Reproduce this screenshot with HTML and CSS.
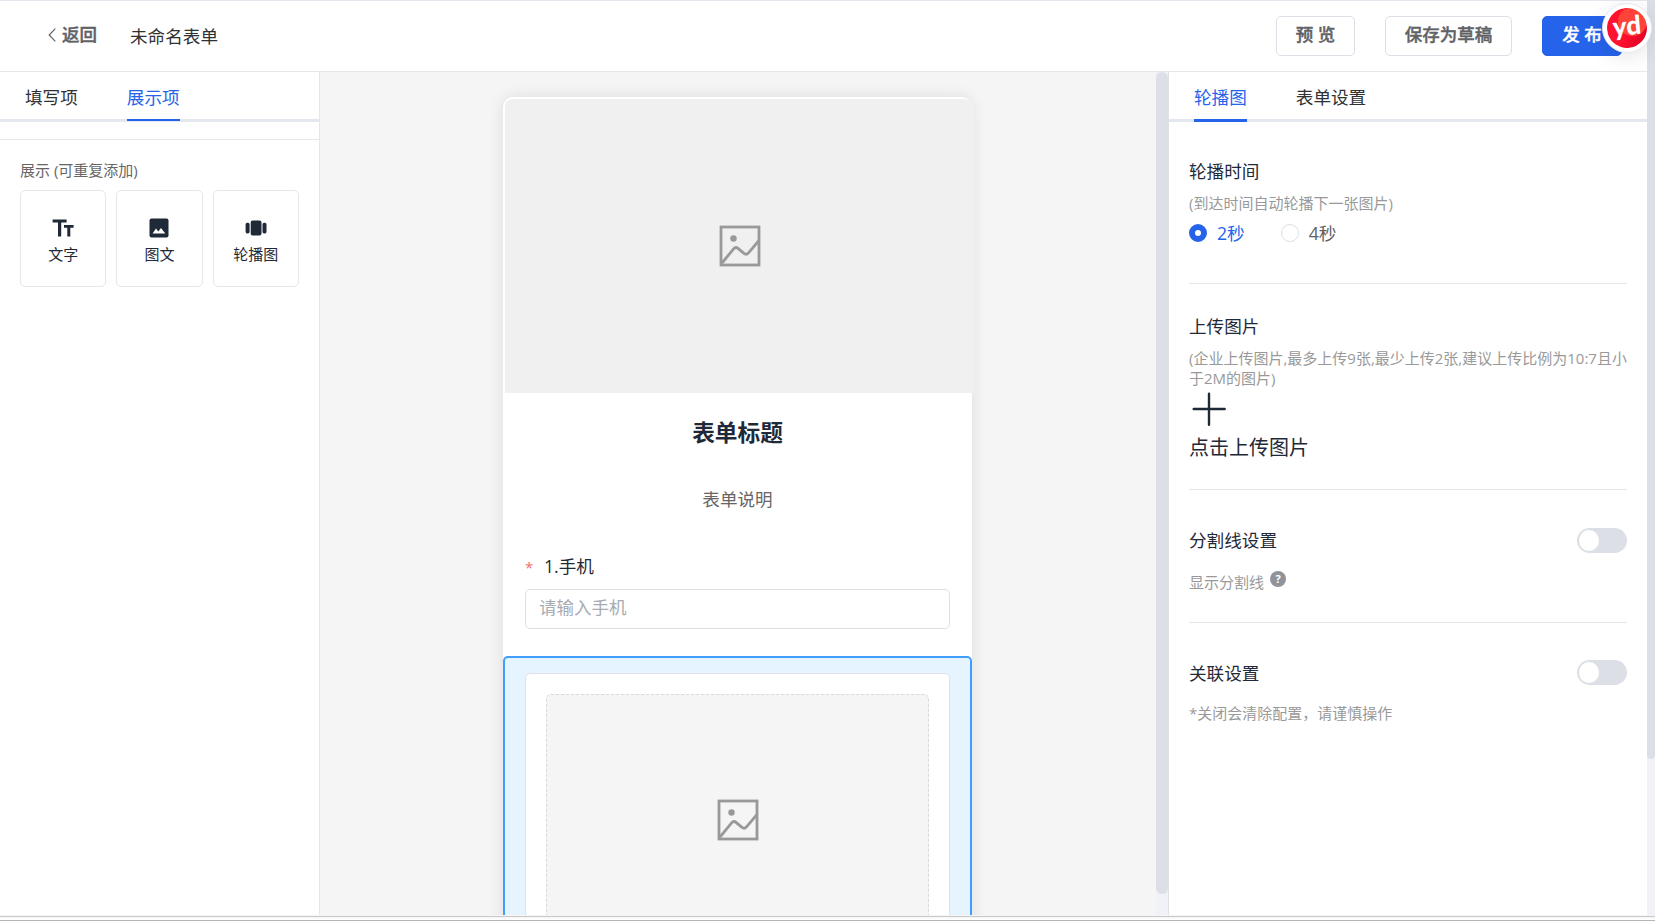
FILE: index.html
```html
<!DOCTYPE html>
<html lang="zh-CN">
<head>
    <meta charset="UTF-8">
    <meta name="viewport" content="width=device-width, initial-scale=1.0">
    <title>未命名表单</title>
    <link rel="stylesheet" href="styles.css">
</head>
<body>
    <div class="app">
        <div class="page">
            <header class="header">
                <button class="back" type="button">
                    <svg width="8" height="14" viewBox="0 0 8 14"><path d="M7.3 .7L1.2 7l6.1 6.3" fill="none" stroke="#606266" stroke-width="1.2"/></svg>
                    <span>返回</span>
                </button>
                <div class="form-name">未命名表单</div>
                <div class="actions">
                    <button class="btn" type="button">预 览</button>
                    <button class="btn btn-draft" type="button">保存为草稿</button>
                    <button class="btn btn-primary" type="button">发 布</button>
                </div>
            </header>
            <main class="main">
                <aside class="left">
                    <nav class="tabs">
                        <div class="tab">填写项</div>
                        <div class="tab active">展示项</div>
                    </nav>
                    <div class="widgets">
                        <div class="widgets-title">展示 (可重复添加)</div>
                        <div class="widget-list">
                            <div class="widget">
                                <svg width="22" height="22" viewBox="0 0 22 22"><path d="M.6 2.4h14v3H9.2v14H6v-14H.6zM12 8h9.6v2.8h-3.3v8.6h-3V10.8H12z" fill="#1f2937"/></svg>
                                <span>文字</span>
                            </div>
                            <div class="widget">
                                <svg width="22" height="22" viewBox="0 0 22 22"><rect x="1.5" y="1.5" width="19" height="19" rx="2" fill="#1f2937"/><path d="M4.6 16.4l3.4-4.8 2.3 2.9 2.7-3.6 4.3 5.5z" fill="#fff"/></svg>
                                <span>图文</span>
                            </div>
                            <div class="widget">
                                <svg width="22" height="22" viewBox="0 0 22 22"><rect x="5.7" y="3.5" width="10.8" height="15" rx="2" fill="#1f2937"/><rect x=".6" y="5.8" width="4" height="10.6" rx="1.6" fill="#1f2937"/><rect x="17.5" y="5.8" width="4" height="10.6" rx="1.6" fill="#1f2937"/></svg>
                                <span>轮播图</span>
                            </div>
                        </div>
                    </div>
                </aside>
                <section class="canvas">
                    <div class="phone">
                        <div class="cover">
                            <svg class="pic" width="42" height="42" viewBox="0 0 42 42"><g fill="none" stroke="#999" stroke-width="2.8"><rect x="2" y="2" width="38" height="38"/><path d="M3 38l11.6-14.2q2.1-2.4 4.4-.4l6 5q2.4 1.8 4.5-.6L40 15.5"/></g><circle cx="14.5" cy="13.5" r="3.2" fill="#999"/></svg>
                        </div>
                        <h1 class="form-title">表单标题</h1>
                        <p class="form-desc">表单说明</p>
                        <div class="field">
                            <label class="field-label"><span class="star">*</span>1.手机</label>
                            <input class="field-input" type="text" placeholder="请输入手机">
                        </div>
                        <div class="block">
                            <div class="block-card">
                                <div class="slide">
                                    <svg class="pic" width="42" height="42" viewBox="0 0 42 42"><g fill="none" stroke="#999" stroke-width="2.8"><rect x="2" y="2" width="38" height="38"/><path d="M3 38l11.6-14.2q2.1-2.4 4.4-.4l6 5q2.4 1.8 4.5-.6L40 15.5"/></g><circle cx="14.5" cy="13.5" r="3.2" fill="#999"/></svg>
                                </div>
                            </div>
                        </div>
                    </div>
                </section>
                <div class="canvas-bar"><div class="canvas-thumb"></div></div>
                <aside class="right">
                    <nav class="tabs">
                        <div class="tab active">轮播图</div>
                        <div class="tab">表单设置</div>
                    </nav>
                    <div class="settings">
                        <div class="setting setting-time">
                            <div class="setting-title">轮播时间</div>
                            <div class="tip">(到达时间自动轮播下一张图片)</div>
                            <div class="radios">
                                <div class="radio checked"><i></i><span>2秒</span></div>
                                <div class="radio"><i></i><span>4秒</span></div>
                            </div>
                        </div>
                        <div class="setting setting-upload">
                            <div class="setting-title">上传图片</div>
                            <div class="tip">(企业上传图片,最多上传9张,最少上传2张,建议上传比例为10:7且小于2M的图片)</div>
                            <svg class="plus" width="40" height="40" viewBox="0 0 40 40"><path d="M20 4.7v31M4.7 20h31" stroke="#1f2937" stroke-width="2.4" stroke-linecap="round"/></svg>
                            <div class="upload-text">点击上传图片</div>
                        </div>
                        <div class="setting setting-line">
                            <div class="row">
                                <div class="setting-title">分割线设置</div>
                                <div class="switch"></div>
                            </div>
                            <div class="tip tip-help">显示分割线 <span class="help">?</span></div>
                        </div>
                        <div class="setting setting-link">
                            <div class="row">
                                <div class="setting-title">关联设置</div>
                                <div class="switch"></div>
                            </div>
                            <div class="tip">*关闭会清除配置，请谨慎操作</div>
                        </div>
                    </div>
                </aside>
            </main>
        </div>
        <div class="page-bar"><div class="page-thumb"></div></div>
    </div>
    <div class="bottom-edge"></div>
    <div class="yd">
        <div class="yd-inner">yd</div>
    </div>
</body>
</html>
```

FILE: styles.css
```css
* {
    box-sizing: border-box;
}
body {
    margin: 0;
    height: 921px;
    overflow: hidden;
    font-family: "Open Sans", "Noto Sans CJK SC", sans-serif;
    font-size: 17.6px;
    color: #1f2937;
    background: #fff;
}
button, input {
    font-family: inherit;
    font-size: 17.5px;
}
svg {
    display: block;
}
.app {
    display: flex;
    height: 915px;
}
.page {
    flex: 1;
    min-width: 0;
    display: flex;
    flex-direction: column;
}
.page-bar {
    width: 8px;
    background: #f1f2f7;
}
.page-thumb {
    height: 759px;
    background: #dcdfe6;
    border-radius: 0 0 4px 4px;
}
.bottom-edge {
    height: 6px;
    border-bottom: 1px solid #b4b4ba;
    background: linear-gradient(#f5f5f5 1px, #c9c9c9 1px, #c9c9c9 2px, #f3f3f3 2px, #fff 4px);
}

/* header */
.header {
    height: 72px;
    flex-shrink: 0;
    display: flex;
    align-items: center;
    border-top: 1px solid #e4e7ed;
    border-bottom: 1px solid #e5e7eb;
    padding: 0 25px 0 26px;
}
.back {
    display: flex;
    align-items: center;
    gap: 6px;
    height: 40px;
    padding: 0 17px 2px 22px;
    border: none;
    background: none;
    color: #606266;
    font-weight: 500;
    -webkit-text-stroke: .4px;
}
.back span {
    line-height: 24px;
    margin-bottom: 2px;
}
.form-name {
    margin-left: 16px;
    color: #303133;
    line-height: 24px;
}
.actions {
    display: flex;
    gap: 30px;
    margin-left: auto;
}
.btn {
    width: 79px;
    height: 40px;
    padding: 0 0 5px;
    line-height: 24px;
    border: 1px solid #dcdfe6;
    border-radius: 5px;
    background: #fff;
    color: #606266;
    font-weight: 500;
    white-space: nowrap;
    -webkit-text-stroke: .4px;
}
.btn-draft {
    width: 127px;
}
.btn-primary {
    width: 80px;
    background: #2563eb;
    border-color: #2563eb;
    color: #fff;
}

/* columns */
.main {
    flex: 1;
    min-height: 0;
    display: flex;
}
.left {
    width: 320px;
    border-right: 1px solid #e5e7eb;
}
.right {
    width: 479px;
    border-left: 1px solid #e0e1e5;
}
.tabs {
    display: flex;
    gap: 49px;
    height: 50px;
    padding-left: 25px;
    box-shadow: inset 0 -3px #e4e7ed;
    color: #303133;
}
.tab {
    height: 49px;
    line-height: 50px;
}
.tab.active {
    color: #2563eb;
    box-shadow: inset 0 -2px #2563eb;
}
.right .tab.active {
    height: 50px;
    box-shadow: inset 0 -3px #2563eb;
}

.widgets {
    margin-top: 17px;
    padding: 19px 20px 0;
    border-top: 1px solid #e5e7eb;
}
.widgets-title {
    font-size: 15px;
    line-height: 22px;
    margin-bottom: 9px;
    color: #666;
}
.widget-list {
    display: flex;
    gap: 10px;
}
.widget {
    flex: 1;
    height: 97px;
    display: flex;
    flex-direction: column;
    align-items: center;
    padding-top: 26px;
    border: 1px solid #e5e7eb;
    border-radius: 5px;
    font-size: 15px;
    line-height: 22px;
}
.widget span {
    margin-top: 4px;
}

/* canvas */
.canvas {
    flex: 1;
    min-width: 0;
    overflow: hidden;
    background: #f5f5f5;
    padding: 25px 0 0 183px;
}
.canvas-bar {
    width: 12px;
    background: #f1f2f7;
}
.canvas-thumb {
    height: 822px;
    background: #dcdfe6;
    border-radius: 6px;
}
.phone {
    width: 469px;
    height: 1100px;
    background: #fff;
    border-radius: 10px;
    box-shadow: 0 0 15px rgba(0, 0, 0, .1);
}
.cover {
    width: 471px;
    height: 296px;
    border: 2px solid transparent;
    border-width: 2px 0 0 2px;
    border-radius: 10px 10px 0 0;
    background: #f0f0f0 padding-box;
    display: flex;
    justify-content: center;
    align-items: center;
}
.form-title {
    margin: 24px 0 0;
    font-size: 22.7px;
    line-height: 32px;
    font-weight: 700;
    text-align: center;
}
.form-desc {
    margin: 38px 0 0;
    line-height: 24px;
    text-align: center;
    color: #666;
}
.field {
    padding: 43px 22px 0;
    height: 145px;
}
.field-label {
    display: block;
    line-height: 24px;
    margin-bottom: 10px;
}
.star {
    display: inline-block;
    width: 19px;
    color: #f56c6c;
    font-size: 15px;
}
.field-input {
    display: block;
    width: 425px;
    height: 40px;
    padding: 0 13px 5px;
    border: 1px solid #dcdfe6;
    border-radius: 5px;
    outline: none;
}
.field-input::placeholder {
    color: #a8abb2;
}
.block {
    height: 500px;
    padding: 15px 20px;
    border: 2px solid #409eff;
    border-radius: 5px;
    background: #e6f4ff;
}
.block-card {
    height: 460px;
    padding: 20px;
    border: 1px solid #dfe1e5;
    border-radius: 5px;
    background: #fff;
}
.slide {
    height: 250px;
    display: flex;
    justify-content: center;
    align-items: center;
    border: 1px dashed #d9d9d9;
    border-bottom: none;
    border-radius: 5px 5px 0 0;
    background: #f5f5f5;
}

/* settings */
.settings {
    padding: 0 20px;
}
.setting {
    border-bottom: 1px solid #e5e7eb;
}
.setting-title {
    line-height: 24px;
}
.tip {
    font-size: 15px;
    line-height: 20px;
    color: #999;
}
.setting-time {
    height: 162px;
    padding-top: 37px;
}
.setting-time .tip {
    margin-top: 10px;
}
.radios {
    display: flex;
    gap: 36px;
    margin-top: 8px;
    color: #606266;
}
.radio {
    display: flex;
    align-items: center;
    gap: 10px;
    line-height: 24px;
}
.radio i {
    width: 18px;
    height: 18px;
    border: 1px solid #dcdfe6;
    border-radius: 50%;
    background: #fff;
}
.radio.checked {
    color: #2563eb;
}
.radio.checked i {
    border: 6px solid #2563eb;
}
.setting-upload {
    height: 206px;
    padding-top: 30px;
}
.setting-upload .tip {
    margin-top: 10px;
    margin-right: -2px;
}
.plus {
    margin-top: 1px;
}
.upload-text {
    font-size: 20px;
    line-height: 28px;
    margin-top: 5px;
}
.setting-line {
    height: 133px;
    padding-top: 38px;
}
.row {
    display: flex;
    justify-content: space-between;
    align-items: center;
    height: 25px;
}
.setting-line .setting-title {
    margin-bottom: 2px;
}
.switch {
    width: 50px;
    height: 25px;
    padding: 2px;
    border-radius: 13px;
    background: #dcdfe6;
}
.switch::before {
    content: "";
    display: block;
    width: 20px;
    height: 21px;
    border-radius: 50%;
    background: #fff;
}
.tip-help {
    display: flex;
    gap: 6px;
    margin-top: 19px;
}
.help {
    width: 16px;
    height: 16px;
    margin-top: -1px;
    border-radius: 50%;
    background: #909399;
    color: #fff;
    font-size: 11px;
    font-weight: 700;
    line-height: 16px;
    text-align: center;
}
.setting-link {
    padding-top: 37px;
    border-bottom: none;
}
.setting-link .tip {
    margin-top: 18px;
}

/* floating badge */
.yd {
    position: absolute;
    left: 1602px;
    top: 3px;
    width: 50px;
    height: 50px;
    padding: 4px;
    border: 1px solid #e4e7f5;
    border-radius: 50%;
    background: #fff;
    box-shadow: 0 4px 20px rgba(0, 0, 0, .1);
}
.yd-inner {
    width: 40px;
    height: 40px;
    border-radius: 50%;
    background: radial-gradient(circle at 26px 14px, #ff4338 0 14px, transparent 15px), linear-gradient(120deg, #ff1230 50%, #d80020);
    color: #fff;
    font-family: Lato, sans-serif;
    font-weight: 900;
    font-size: 26px;
    line-height: 34px;
    text-align: center;
    transform: rotate(-5deg);
}
```
